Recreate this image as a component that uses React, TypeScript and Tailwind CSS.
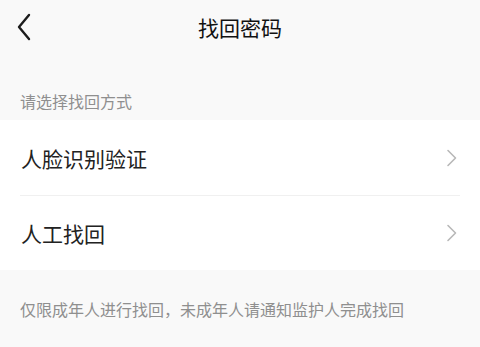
export default function App() {
  const font = { fontFamily: '"Noto Sans CJK SC", "Noto Sans", sans-serif' };
  const Chevron = () => (
    <svg width="12" height="18" viewBox="0 0 12 18" className="shrink-0">
      <path d="M2 1.5 L9.5 9 L2 16.5" fill="none" stroke="#b8b8b8" strokeWidth="1.6" strokeLinecap="round" strokeLinejoin="round" />
    </svg>
  );
  return (
    <div className="w-[480px] h-[347px] bg-[#f9f9f9] overflow-hidden" style={font}>
      <div className="h-[54px] grid grid-cols-[1fr_auto_1fr] items-center">
        <div className="pl-[17px] flex items-center">
          <svg width="16" height="28" viewBox="0 0 16 28">
            <path d="M12 2 L2 14 L12 26" fill="none" stroke="#1c1c1c" strokeWidth="2.4" strokeLinecap="round" strokeLinejoin="round" />
          </svg>
        </div>
        <div className="text-[21px] leading-[24px] font-normal text-[#111]">找回密码</div>
        <div />
      </div>
      <div className="h-[66px] flex items-end pb-[11px] pl-[20px] text-[16px] leading-[16px] text-[#8f8f8f]">
        请选择找回方式
      </div>
      <div className="bg-white">
        <div className="h-[75px] flex items-center justify-between pl-[21px] pr-[22px]">
          <span className="text-[21px] leading-[24px] text-[#222]">人脸识别验证</span>
          <Chevron />
        </div>
        <div className="mx-[20px] h-px bg-[#f0f0f0]" />
        <div className="h-[74px] flex items-center justify-between pl-[21px] pr-[22px]">
          <span className="text-[21px] leading-[24px] text-[#222]">人工找回</span>
          <Chevron />
        </div>
      </div>
      <div className="pt-[31px] pl-[20px] text-[16px] leading-[17px] text-[#8f8f8f] whitespace-nowrap">
        仅限成年人进行找回，未成年人请通知监护人完成找回
      </div>
    </div>
  );
}
